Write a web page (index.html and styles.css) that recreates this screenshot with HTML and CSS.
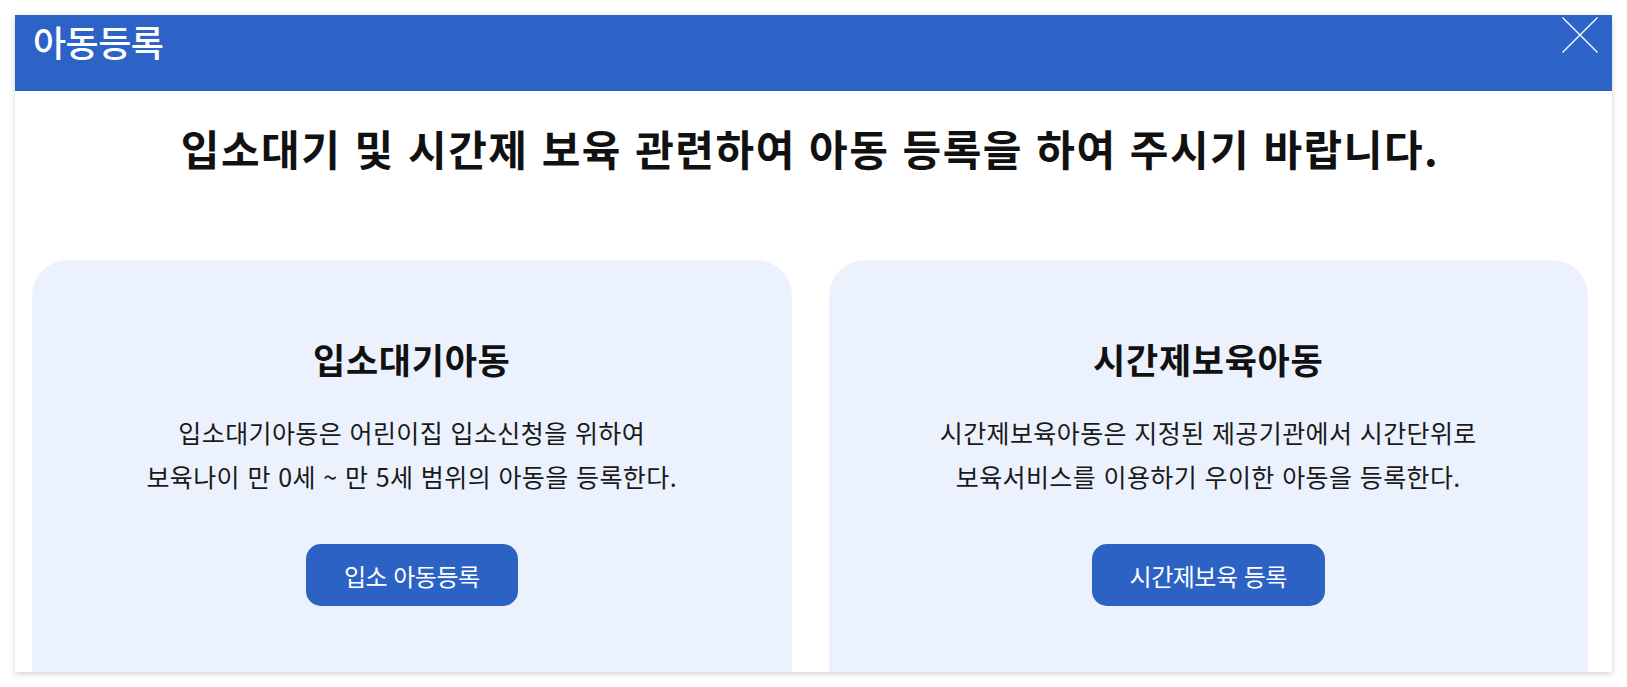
FILE: index.html
```html
<!DOCTYPE html>
<html lang="ko">
<head>
    <meta charset="UTF-8">
    <meta name="viewport" content="width=device-width, initial-scale=1.0">
    <title>아동등록</title>
    <link rel="stylesheet" href="styles.css">
</head>
<body>
    <div class="modal">
        <div class="modal-header">
            <h1>아동등록</h1>
            <button class="close-btn" aria-label="닫기">
                <svg width="36" height="36" viewBox="0 0 36 36">
                    <line x1="0.5" y1="0.5" x2="35.5" y2="35.5" stroke="#fff" stroke-width="1.3"/>
                    <line x1="35.5" y1="0.5" x2="0.5" y2="35.5" stroke="#fff" stroke-width="1.3"/>
                </svg>
            </button>
        </div>
        <div class="modal-body">
            <h2 class="notice">입소대기 및 시간제 보육 관련하여 아동 등록을 하여 주시기 바랍니다.</h2>
            <div class="cards">
                <div class="card">
                    <h3>입소대기아동</h3>
                    <p>입소대기아동은 어린이집 입소신청을 위하여<br>보육나이 만 0세 ~ 만 5세 범위의 아동을 등록한다.</p>
                    <button class="btn btn-wait">입소 아동등록</button>
                </div>
                <div class="card">
                    <h3>시간제보육아동</h3>
                    <p>시간제보육아동은 지정된 제공기관에서 시간단위로<br>보육서비스를 이용하기 우이한 아동을 등록한다.</p>
                    <button class="btn btn-time">시간제보육 등록</button>
                </div>
            </div>
        </div>
    </div>
</body>
</html>
```

FILE: styles.css
```css
body {
    margin: 0;
    padding: 15px;
    background-color: #fff;
    font-family: "Noto Sans CJK KR", "Noto Sans", sans-serif;
    color: #111;
}
.modal {
    position: relative;
    height: 657px;
    background-color: #fff;
    box-shadow: 0 2px 6px rgba(0,0,0,0.18);
    overflow: hidden;
}
.modal-header {
    height: 76px;
    background-color: #2d63c6;
    padding: 0 18px;
    box-sizing: border-box;
}
.modal-header h1 {
    margin: 0;
    color: #fff;
    font-size: 36px;
    font-weight: 500;
    line-height: 52px;
    letter-spacing: -0.5px;
}
.close-btn {
    position: absolute;
    top: 2px;
    right: 14px;
    width: 36px;
    height: 36px;
    padding: 0;
    border: none;
    background: none;
    cursor: pointer;
}
.close-btn svg {
    display: block;
}
.modal-body {
    padding: 0 24px 0 17px;
}
.notice {
    margin: 33px 0 88px;
    text-align: center;
    font-size: 42px;
    font-weight: 700;
    line-height: 48px;
    letter-spacing: 1.5px;
}
.cards {
    display: grid;
    grid-template-columns: 1fr 1fr;
    gap: 37px;
}
.card {
    height: 500px;
    background-color: #ecf2fd;
    border-radius: 36px;
    padding-top: 79px;
    box-sizing: border-box;
    text-align: center;
}
.card h3 {
    margin: 0;
    font-size: 35px;
    font-weight: 700;
    line-height: 40px;
    letter-spacing: 0.7px;
}
.card p {
    margin: 31px 0 46px;
    font-size: 25px;
    line-height: 44px;
    letter-spacing: 0.4px;
    color: #1a1a1a;
}
.btn {
    height: 62px;
    padding: 0;
    border: none;
    border-radius: 15px;
    background-color: #2d62c5;
    color: #fff;
    font-family: inherit;
    font-size: 24px;
    letter-spacing: -0.5px;
    cursor: pointer;
}
.btn:hover {
    background-color: #2555b0;
}
.btn-wait {
    width: 212px;
}
.btn-time {
    width: 233px;
}
```
